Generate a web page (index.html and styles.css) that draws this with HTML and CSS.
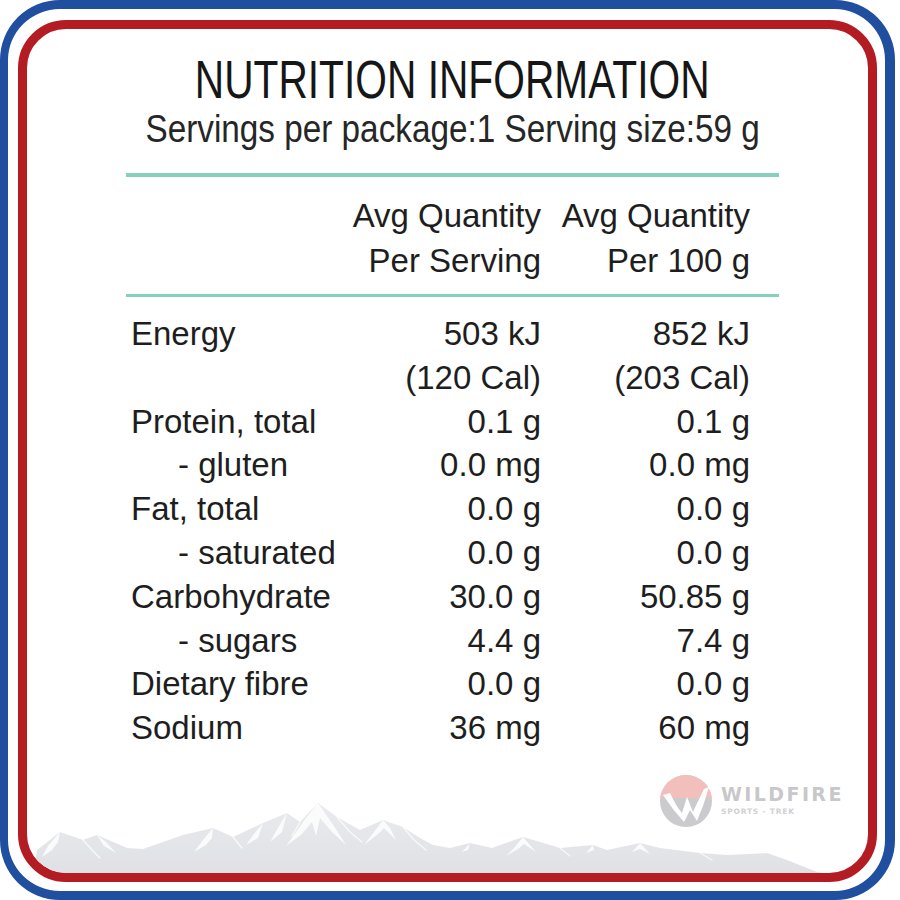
FILE: index.html
```html
<!DOCTYPE html>
<html>
<head>
<meta charset="utf-8">
<link rel="stylesheet" href="styles.css">
</head>
<body>
<div class="page">
  <div class="frame-blue">
    <div class="frame-red">
      <svg class="mountains" width="841" height="844" viewBox="27 29 841 844" xmlns="http://www.w3.org/2000/svg">
        <defs>
          <linearGradient id="mg" x1="0" y1="0" x2="0" y2="1">
            <stop offset="0" stop-color="#e9ebee"/>
            <stop offset="1" stop-color="#dfe1e5"/>
          </linearGradient>
        </defs>
        <polygon fill="url(#mg)" points="33,873 37,850 60,832 83,840 97,835 127,848 143,849 183,835 213,828 233,837 263,823 287,813 300,822 318,803 337,817 360,830 383,820 403,827 420,838 433,845 450,848 470,843 492,848 523,837 540,842 560,848 593,845 607,850 640,843 660,848 700,853 727,855 767,853 787,860 817,872 822,873"/>
        <g fill="#ffffff" opacity="0.85">
          <polygon points="60,832 48,846 42,857 52,850 58,842"/>
          <polygon points="97,835 104,846 116,853 106,842"/>
          <polygon points="213,828 203,840 194,852 206,845 212,838"/>
          <polygon points="263,823 254,834 246,845 258,838"/>
          <polygon points="287,813 279,826 270,842 282,832"/>
          <polygon points="318,803 306,818 296,832 286,846 302,834 312,822 316,836 320,818 332,832 346,845 334,826"/>
          <polygon points="383,820 374,832 364,845 378,834 384,828 396,840 390,828"/>
          <polygon points="470,843 462,852 468,850"/>
          <polygon points="523,837 514,848 506,856 518,849 524,844 536,852"/>
          <polygon points="593,845 586,853 594,850"/>
          <polygon points="640,843 632,852 640,849 650,854"/>
        </g>
        <g fill="none" stroke="#ffffff" stroke-width="1.2" stroke-linecap="round" opacity="0.8">
          <polyline points="83,840 92,850 100,858"/>
          <polyline points="233,837 242,848"/>
          <polyline points="300,822 292,836"/>
          <polyline points="337,817 350,832 362,842"/>
          <polyline points="403,827 414,840 426,850"/>
          <polyline points="560,848 570,856"/>
          <polyline points="700,853 712,860"/>
        </g>
      </svg>
      <div class="panel">
        <div class="title-row"><span class="title">NUTRITION INFORMATION</span></div>
        <div class="sub-row"><span class="subtitle">Servings per package:1 Serving size:59 g</span></div>
        <div class="rule rule-top"></div>
        <div class="grid head">
          <div class="label"></div>
          <div class="num">Avg Quantity<br>Per Serving</div>
          <div class="num">Avg Quantity<br>Per 100 g</div>
        </div>
        <div class="rule rule-mid"></div>
        <div class="grid rows">
          <div class="label">Energy</div><div class="num">503 kJ<br>(120 Cal)</div><div class="num">852 kJ<br>(203 Cal)</div>
          <div class="label">Protein, total</div><div class="num">0.1 g</div><div class="num">0.1 g</div>
          <div class="label sub">- gluten</div><div class="num">0.0 mg</div><div class="num">0.0 mg</div>
          <div class="label">Fat, total</div><div class="num">0.0 g</div><div class="num">0.0 g</div>
          <div class="label sub">- saturated</div><div class="num">0.0 g</div><div class="num">0.0 g</div>
          <div class="label">Carbohydrate</div><div class="num">30.0 g</div><div class="num">50.85 g</div>
          <div class="label sub">- sugars</div><div class="num">4.4 g</div><div class="num">7.4 g</div>
          <div class="label">Dietary fibre</div><div class="num">0.0 g</div><div class="num">0.0 g</div>
          <div class="label">Sodium</div><div class="num">36 mg</div><div class="num">60 mg</div>
        </div>
      </div>
      <div class="brand">
        <svg class="brand-mark" width="52" height="52" viewBox="0 0 52 52" xmlns="http://www.w3.org/2000/svg">
          <defs>
            <clipPath id="cc"><circle cx="26" cy="26" r="26"/></clipPath>
          </defs>
          <g clip-path="url(#cc)">
            <rect x="0" y="0" width="52" height="52" fill="#cbcbce"/>
            <rect x="0" y="0" width="52" height="23" fill="#f2bfbd"/>
          </g>
          <path fill="#ffffff" d="M3,20 L10,18 Q16,31 22,38 L27,22 L33,37 Q38,26 44,14 L49,12 Q44,30 37,46 L30,35 L24,47 Q12,34 3,20 Z"/>
        </svg>
        <div class="brand-text">
          <div class="brand-name">WILDFIRE</div>
          <div class="brand-tag">SPORTS - TREK</div>
        </div>
      </div>
    </div>
  </div>
</div>
</body>
</html>
```

FILE: styles.css
```css
html, body {
  margin: 0;
  padding: 0;
  background: #ffffff;
}

.page {
  width: 900px;
  height: 900px;
  overflow: hidden;
  background: #ffffff;
}

.frame-blue {
  box-sizing: border-box;
  width: 895px;
  height: 900px;
  border-style: solid;
  border-color: #1f4f9e;
  border-width: 9px 10px 9px 8px;
  border-radius: 60px;
  padding: 11px 8px 9px 10px;
}

.frame-red {
  box-sizing: border-box;
  position: relative;
  height: 100%;
  border: 9px solid #b41c23;
  border-radius: 48px;
  overflow: hidden;
}

.mountains {
  position: absolute;
  left: 0;
  top: 0;
}

.panel {
  position: relative;
  width: 653px;
  padding: 24px 0 0 99px;
  font-family: "Liberation Sans", Arial, sans-serif;
  color: #1e1e1e;
}

.title-row,
.sub-row {
  display: flex;
  justify-content: center;
}

.title {
  display: inline-block;
  font-size: 53px;
  line-height: 54px;
  height: 54px;
  white-space: nowrap;
  color: #161616;
  transform: scaleX(0.768);
}

.subtitle {
  display: inline-block;
  font-size: 38px;
  line-height: 44px;
  height: 44px;
  white-space: nowrap;
  color: #262626;
  transform: scaleX(0.876);
}

.rule {
  background: #86d0bc;
}

.rule-top {
  margin-top: 22px;
  height: 4px;
}

.rule-mid {
  margin-top: 11px;
  height: 3px;
}

.grid {
  display: grid;
  grid-template-columns: 1fr 200px 209px;
  padding: 0 29px 0 5px;
  font-size: 33px;
  white-space: nowrap;
}

.head {
  margin-top: 16px;
  line-height: 45px;
}

.rows {
  margin-top: 15px;
  line-height: 43.8px;
}

.num {
  text-align: right;
}

.label.sub {
  padding-left: 47px;
}

.brand {
  position: absolute;
  left: 633px;
  top: 746px;
  display: flex;
  align-items: flex-start;
  gap: 9px;
}

.brand-mark {
  display: block;
}

.brand-text {
  padding-top: 8px;
  font-family: "DejaVu Sans", sans-serif;
  font-weight: bold;
  color: #c8c8ca;
}

.brand-name {
  font-size: 19px;
  line-height: 22px;
  letter-spacing: 2.4px;
}

.brand-tag {
  margin-top: 2px;
  font-size: 7.5px;
  line-height: 9px;
  letter-spacing: 0.8px;
  color: #d0d0d2;
}
```
